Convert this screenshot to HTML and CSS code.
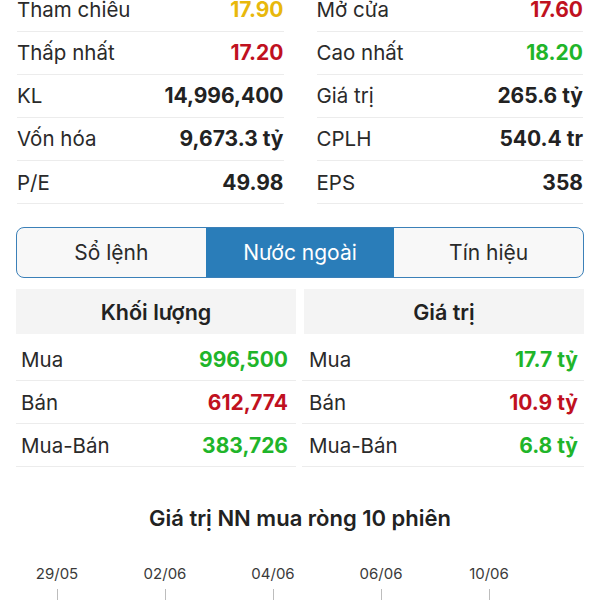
FILE: index.html
```html
<!DOCTYPE html>
<html lang="vi">
<head>
  <meta charset="UTF-8">
  <meta name="viewport" content="width=device-width, initial-scale=1.0">
  <title>Thông tin cổ phiếu</title>
  <link rel="stylesheet" href="styles.css">
</head>
<body>
  <div class="stats">
    <div class="stat-col">
      <div class="stat-row"><span>Tham chiêu</span><strong class="ref">17.90</strong></div>
      <div class="stat-row"><span>Thấp nhất</span><strong class="down">17.20</strong></div>
      <div class="stat-row"><span>KL</span><strong>14,996,400</strong></div>
      <div class="stat-row"><span>Vốn hóa</span><strong>9,673.3 tỷ</strong></div>
      <div class="stat-row"><span>P/E</span><strong>49.98</strong></div>
    </div>
    <div class="stat-col">
      <div class="stat-row"><span>Mở cửa</span><strong class="down">17.60</strong></div>
      <div class="stat-row"><span>Cao nhất</span><strong class="up">18.20</strong></div>
      <div class="stat-row"><span>Giá trị</span><strong>265.6 tỷ</strong></div>
      <div class="stat-row"><span>CPLH</span><strong>540.4 tr</strong></div>
      <div class="stat-row"><span>EPS</span><strong>358</strong></div>
    </div>
  </div>

  <div class="tabs">
    <button class="tab">Sổ lệnh</button>
    <button class="tab active">Nước ngoài</button>
    <button class="tab">Tín hiệu</button>
  </div>

  <div class="foreign">
    <div class="foreign-col">
      <div class="foreign-head">Khối lượng</div>
      <div class="foreign-row"><span>Mua</span><strong class="up">996,500</strong></div>
      <div class="foreign-row"><span>Bán</span><strong class="down">612,774</strong></div>
      <div class="foreign-row"><span>Mua-Bán</span><strong class="up">383,726</strong></div>
    </div>
    <div class="foreign-col right">
      <div class="foreign-head">Giá trị</div>
      <div class="foreign-row"><span>Mua</span><strong class="up">17.7 tỷ</strong></div>
      <div class="foreign-row"><span>Bán</span><strong class="down">10.9 tỷ</strong></div>
      <div class="foreign-row"><span>Mua-Bán</span><strong class="up">6.8 tỷ</strong></div>
    </div>
  </div>

  <h2 class="chart-title">Giá trị NN mua ròng 10 phiên</h2>

  <div class="axis">
    <div class="tick">29/05</div>
    <div class="tick">02/06</div>
    <div class="tick">04/06</div>
    <div class="tick">06/06</div>
    <div class="tick">10/06</div>
  </div>
</body>
</html>
```

FILE: styles.css
```css
* {
  margin: 0;
  padding: 0;
  box-sizing: border-box;
  font-family: Inter, 'Noto Sans', sans-serif;
}

body {
  background: #fff;
  color: #222;
  font-size: 20.5px;
  overflow: hidden;
}

.up { color: #1fb52a; }
.down { color: #c0111f; }
.ref { color: #e8b80c; }

.stats {
  margin-top: -11.4px;
  padding: 0 17px;
  display: grid;
  grid-template-columns: 1fr 1fr;
  column-gap: 33px;
}

.stat-row {
  height: 43.1px;
  display: flex;
  justify-content: space-between;
  align-items: center;
  border-bottom: 1px solid #ececec;
}

.stat-row span,
.foreign-row span {
  color: #2a2a2a;
}

.stat-row strong,
.foreign-row strong {
  font-size: 21px;
  font-weight: 700;
}

.tabs {
  margin: 23px 16px 0;
  height: 51px;
  display: flex;
  border: 1.5px solid #3b80b8;
  border-radius: 8px;
  overflow: hidden;
  background: #f8f8f8;
}

.tab {
  flex: 1;
  border: none;
  background: none;
  font-size: 21px;
  color: #2a2a2a;
}

.tab.active {
  background: #2a7db9;
  color: #fff;
}

.foreign {
  margin: 11px 16px 0;
  display: grid;
  grid-template-columns: 1fr 1fr;
  column-gap: 8px;
}

.foreign-head {
  height: 45px;
  margin-bottom: 4px;
  background: #f4f4f4;
  display: flex;
  justify-content: center;
  align-items: center;
  font-size: 21.5px;
  font-weight: 600;
}

.foreign-row {
  height: 43px;
  padding: 0 8px 0 5px;
  display: flex;
  justify-content: space-between;
  align-items: center;
  border-bottom: 1px solid #ececec;
}

.foreign-col.right .foreign-row {
  margin-left: -2px;
  padding: 0 6px 0 7px;
}

.chart-title {
  margin-top: 38px;
  text-align: center;
  font-size: 22px;
  font-weight: 600;
  color: #222;
}

.axis {
  margin-top: 33px;
  padding-left: 3px;
  display: flex;
}

.tick {
  width: 108px;
  display: flex;
  flex-direction: column;
  align-items: center;
  font-size: 15px;
  color: #3a3a3a;
}

.tick::after {
  content: '';
  width: 1px;
  height: 14px;
  margin-top: 6px;
  background: #bdbdbd;
}
```
